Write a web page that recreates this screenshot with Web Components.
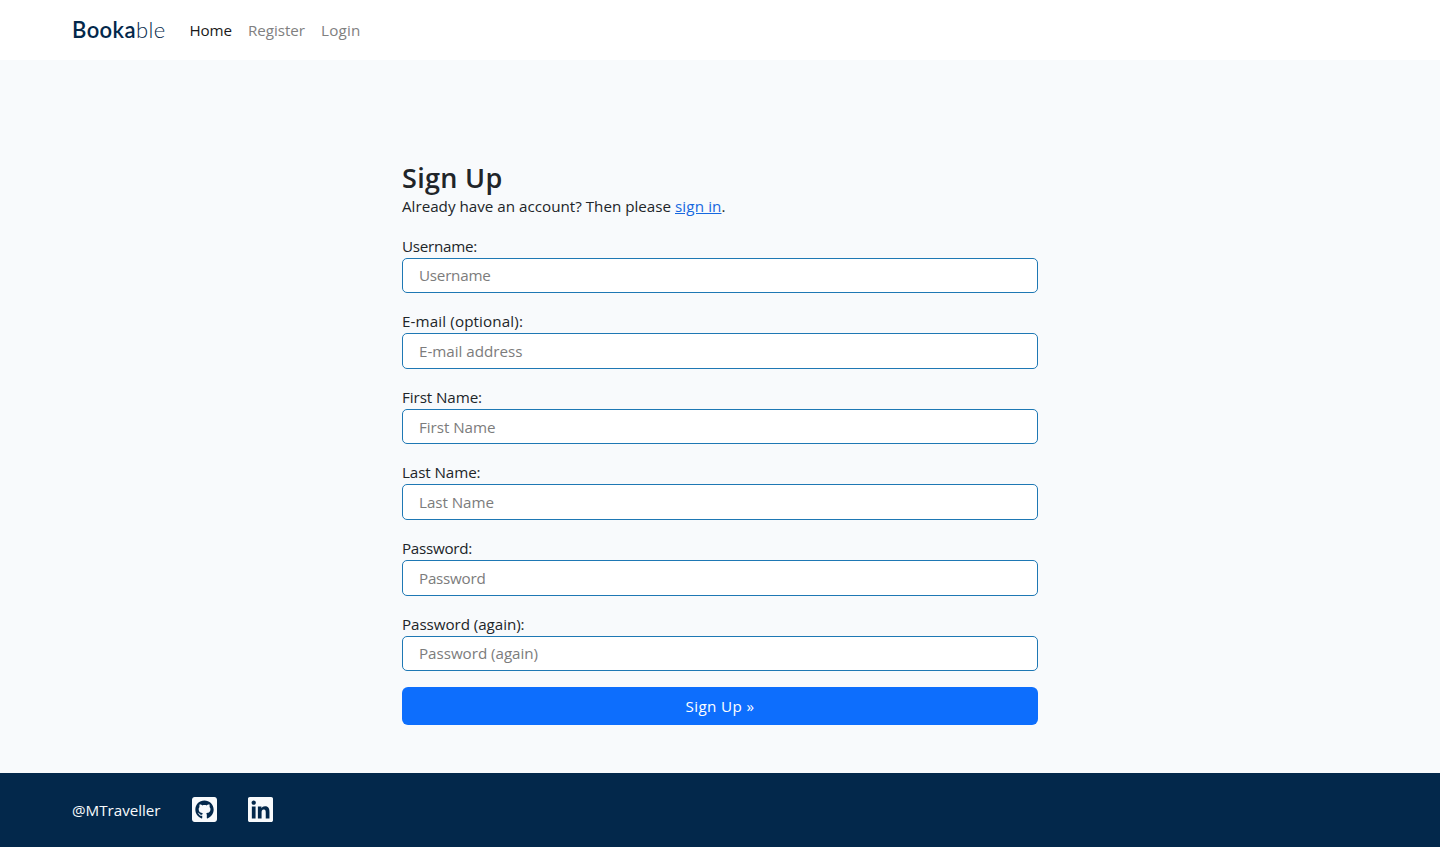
<!DOCTYPE html>
<html lang="en">
<head>
<meta charset="utf-8">
<title>Bookable - Sign Up</title>
<style>
body{margin:0;background:#f8fafc;color:#212529;font:15.2px/24px "Open Sans","Noto Sans",sans-serif}
</style>
</head>
<body>
<app-page></app-page>
<script>
const define = (name, html, init) => {
  const t = document.createElement('template');
  t.innerHTML = html;
  customElements.define(name, class extends HTMLElement {
    connectedCallback() {
      if (this.shadowRoot) return;
      this.attachShadow({mode: 'open'}).append(t.content.cloneNode(true));
      if (init) init(this, this.shadowRoot);
    }
  });
};
// Letter spacing that sets a string to a given width in the element's font.
const ctx = document.createElement('canvas').getContext('2d');
const tracking = (el, text, width) => {
  const s = getComputedStyle(el);
  ctx.font = `${s.fontWeight} ${s.fontSize} ${s.fontFamily}`;
  return (width - ctx.measureText(text).width) / text.length + 'px';
};

define('set-text', `<style>:host{display:inline-block;white-space:pre}</style><slot></slot>`,
  el => { el.style.letterSpacing = tracking(el, el.textContent, +el.getAttribute('width')); });

define('nav-bar', `<style>
:host{display:flex;align-items:center;height:60px;padding:0 72px;box-sizing:border-box;background:#fff}
.brand{font:600 22px/30px Lato,sans-serif;color:#03284b;width:117.5px;white-space:nowrap}
.brand .thin{font-weight:300}
nav{display:flex;gap:16px}
a{color:#808080}a.on{color:#1a1a1a}
</style>
<div class="brand"><set-text width="64">Booka</set-text><set-text class="thin" width="29.5">ble</set-text></div>
<nav><a class="on"><set-text width="42.5">Home</set-text></a><a><set-text width="57">Register</set-text></a><a><set-text width="39.5">Login</set-text></a></nav>`);

define('form-field', `<style>
:host{display:block;height:59.6px;margin-bottom:16px}
label{display:block;height:24px}
input{display:block;box-sizing:border-box;width:100%;height:35.6px;margin:0;padding:0 16px;border:1px solid #1e78b4;border-radius:5px;background:#fff;font:inherit;letter-spacing:inherit;outline:0}
input::placeholder{color:#7c7c7c;opacity:1}
</style><label></label><input>`, (el, root) => {
  const [label, input] = [root.querySelector('label'), root.querySelector('input')];
  const a = n => el.getAttribute(n);
  label.textContent = a('label');
  label.style.letterSpacing = tracking(label, a('label'), +a('label-width'));
  input.placeholder = a('hint');
  input.setAttribute('aria-label', a('label'));
  input.style.letterSpacing = tracking(input, a('hint'), +a('hint-width'));
});

define('sign-up', `<style>
:host{display:block;box-sizing:border-box;width:636px;margin:0 auto;padding:101px 0 48px}
h2{margin:0 0 -1px;font-size:27px;line-height:33.6px;font-weight:600}
p{margin:0 0 16px;height:24px;white-space:nowrap}
a{color:#1668e0}
button{display:block;width:100%;height:38px;border:0;border-radius:6px;background:#0d6efd;color:#fff;font:inherit;padding:0}
</style>
<h2><set-text width="100.5">Sign Up</set-text></h2>
<p><set-text width="273">Already have an account? Then please </set-text><a><set-text width="46.5" style="text-decoration:underline">sign in</set-text></a>.</p>
<form-field label="Username:" label-width="75" hint="Username" hint-width="71.5"></form-field>
<form-field label="E-mail (optional):" label-width="121" hint="E-mail address" hint-width="103.5"></form-field>
<form-field label="First Name:" label-width="80" hint="First Name" hint-width="76.5"></form-field>
<form-field label="Last Name:" label-width="78.5" hint="Last Name" hint-width="75"></form-field>
<form-field label="Password:" label-width="70" hint="Password" hint-width="66.5"></form-field>
<form-field label="Password (again):" label-width="122.5" hint="Password (again)" hint-width="119"></form-field>
<button type="button"><set-text width="69">Sign Up »</set-text></button>`);

define('social-icon', `<style>:host{display:block;width:25px;height:25px}svg{display:block;fill:#f8fafc}</style>
<svg width="25" height="25" viewBox="0 32 448 448"><path/></svg>`, (el, root) => {
  root.querySelector('path').setAttribute('d', {
    github: 'M400 32H48C21.5 32 0 53.5 0 80v352c0 26.5 21.5 48 48 48h352c26.5 0 48-21.5 48-48V80c0-26.5-21.5-48-48-48zM277.3 415.7c-8.4 1.5-11.5-3.7-11.5-8 0-5.4.2-33 .2-55.3 0-15.6-5.2-25.5-11.3-30.7 37-4.1 76-9.2 76-73.1 0-18.2-6.5-27.3-17.1-39 1.7-4.3 7.4-22-1.7-45-13.9-4.3-45.7 17.9-45.7 17.9-13.2-3.7-27.5-5.6-41.6-5.6-14.1 0-28.4 1.9-41.6 5.6 0 0-31.8-22.2-45.7-17.9-9.1 22.9-3.5 40.6-1.7 45-10.6 11.7-15.6 20.8-15.6 39 0 63.6 37.3 69 74.3 73.1-4.8 4.3-9.1 11.7-10.6 22.3-9.5 4.3-33.8 11.7-48.3-13.9-9.1-15.8-25.5-17.1-25.5-17.1-16.2-.2-1.1 10.2-1.1 10.2 10.8 5 18.4 24.2 18.4 24.2 9.7 29.7 56.1 19.7 56.1 19.7 0 13.9.2 36.5.2 40.6 0 4.3-3 9.5-11.5 8-66-22.1-112.2-84.9-112.2-158.3 0-91.8 70.2-161.5 162-161.5S388 165.6 388 257.4c.1 73.4-44.7 136.3-110.7 158.3z',
    linkedin: 'M416 32H31.9C14.3 32 0 46.5 0 64.3v383.4C0 465.5 14.3 480 31.9 480H416c17.6 0 32-14.5 32-32.3V64.3c0-17.8-14.4-32.3-32-32.3zM135.4 416H69V202.2h66.5V416zm-33.2-243c-21.3 0-38.5-17.3-38.5-38.5S80.9 96 102.2 96c21.2 0 38.5 17.3 38.5 38.5 0 21.3-17.2 38.5-38.5 38.5zm282.1 243h-66.4V312c0-24.8-.5-56.7-34.5-56.7-34.6 0-39.9 27-39.9 54.9V416h-66.4V202.2h63.7v29.2h.9c8.9-16.8 30.6-34.5 62.9-34.5 67.2 0 79.7 44.3 79.7 101.9V416z'
  }[el.getAttribute('name')]);
});

define('page-footer', `<style>
:host{display:flex;align-items:center;flex:1;box-sizing:border-box;padding:0 72px 1px;background:#03284b;color:#f8fafc}
.handle{width:120px;padding-top:1px}
social-icon + social-icon{margin-left:31px}
</style>
<div class="handle"><set-text width="88.5">@MTraveller</set-text></div>
<social-icon name="github"></social-icon><social-icon name="linkedin"></social-icon>`);

define('app-page', `<style>:host{display:flex;flex-direction:column;height:847px;overflow:hidden}</style>
<nav-bar></nav-bar><sign-up></sign-up><page-footer></page-footer>`);
</script>
</body>
</html>
